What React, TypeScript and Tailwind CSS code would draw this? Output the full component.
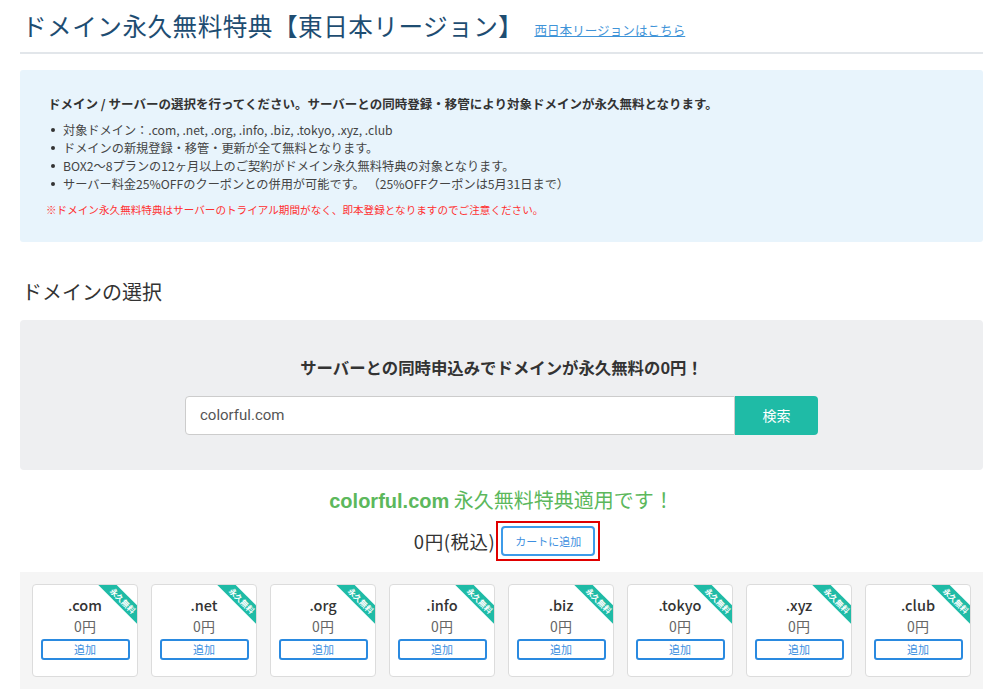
import React from "react";

const tlds = [".com", ".net", ".org", ".info", ".biz", ".tokyo", ".xyz", ".club"];

const bullets = [
    "対象ドメイン：.com, .net, .org, .info, .biz, .tokyo, .xyz, .club",
    "ドメインの新規登録・移管・更新が全て無料となります。",
    "BOX2～8プランの12ヶ月以上のご契約がドメイン永久無料特典の対象となります。",
    "サーバー料金25%OFFのクーポンとの併用が可能です。 （25%OFFクーポンは5月31日まで）",
];

function DomainCard({ tld }: { tld: string }) {
    return (
        <div className="relative w-[106px] h-[93px] bg-white border border-[#dcdcdc] rounded-[4px] overflow-hidden flex flex-col items-center pt-[11px]">
            {/* corner ribbon */}
            <div className="absolute -right-[24px] top-[9px] w-[76px] h-[13px] rotate-45 bg-[#1fbba6] flex items-center justify-center">
                <span className="text-[8px] leading-none font-bold text-white">永久無料</span>
            </div>
            <div className="text-[14.5px] leading-[18px] font-medium text-[#333]">{tld}</div>
            <div className="mt-[3px] text-[14px] leading-[18px] text-[#666]">0円</div>
            <button className="mt-[4px] w-[89px] h-[21px] border-2 border-[#2a8ae0] rounded-[3px] bg-white text-[11px] leading-none text-[#3a8fe0]">
                追加
            </button>
        </div>
    );
}

export default function App() {
    return (
        <div
            className="w-[1000px] h-[690px] overflow-hidden bg-white text-[#333]"
            style={{ fontFamily: '"Noto Sans CJK JP", "Noto Sans", sans-serif' }}
        >
            <div className="ml-[20px] w-[963px]">
                {/* Header */}
                <div className="flex items-end pt-[8px] pb-[10px] border-b-2 border-[#e2e6ea]">
                    <h1 className="text-[24.6px] leading-[34px] tracking-[0.5px] text-[#1e4d72] ml-[2px]">
                        ドメイン永久無料特典【東日本リージョン】
                    </h1>
                    <a className="ml-[11px] mb-[3px] text-[12.6px] leading-[18px] text-[#3f94d8] underline">
                        西日本リージョンはこちら
                    </a>
                </div>

                {/* Info box */}
                <div className="mt-[16px] h-[172px] bg-[#e8f4fc] rounded-[3px] pl-[28px] pt-[25px]">
                    <p className="text-[12.5px] leading-[18px] font-bold text-[#333]">
                        ドメイン / サーバーの選択を行ってください。サーバーとの同時登録・移管により対象ドメインが永久無料となります。
                    </p>
                    <ul className="mt-[8px]">
                        {bullets.map((b) => (
                            <li key={b} className="flex items-center h-[18px] text-[12.2px] text-[#444]">
                                <span className="ml-[3px] w-[4px] h-[4px] rounded-full bg-[#333] shrink-0"></span>
                                <span className="ml-[8px]">{b}</span>
                            </li>
                        ))}
                    </ul>
                    <p className="mt-[9px] -ml-[2px] text-[10.6px] leading-[16px] text-[#ff3030]">
                        ※ドメイン永久無料特典はサーバーのトライアル期間がなく、即本登録となりますのでご注意ください。
                    </p>
                </div>

                {/* Domain select */}
                <h2 className="mt-[36px] ml-[2px] text-[20px] leading-[28px] text-[#333]">ドメインの選択</h2>

                <div className="mt-[14px] h-[150px] bg-[#eeeff1] rounded-[4px] flex flex-col items-center pt-[35px]">
                    <p className="text-[16.4px] leading-[24px] font-bold text-[#333]">
                        サーバーとの同時申込みでドメインが永久無料の0円！
                    </p>
                    <div className="mt-[17px] flex">
                        <div className="w-[550px] h-[39px] bg-white border border-[#cccccc] rounded-l-[4px] flex items-center pl-[14px]">
                            <span className="text-[15px] text-[#555]" style={{ fontFamily: "Roboto, sans-serif" }}>
                                colorful.com
                            </span>
                        </div>
                        <button className="w-[83px] h-[39px] bg-[#1fbba6] rounded-r-[4px] text-white text-[14px]">
                            検索
                        </button>
                    </div>
                </div>

                {/* Result */}
                <div className="mt-[16px] flex flex-col items-center">
                    <p className="text-[20px] leading-[28px] text-[#5cb85c]">
                        <span className="font-bold" style={{ fontFamily: '"Liberation Sans", Arial, sans-serif' }}>
                            colorful.com
                        </span>{" "}
                        永久無料特典適用です！
                    </p>
                    <div className="mt-[6px] flex items-center ml-[11px]">
                        <span className="text-[18.5px] leading-[26px] tracking-[0.5px] text-[#333]">0円(税込)</span>
                        <div className="ml-[1px] border-2 border-[#e00000] p-[3px]">
                            <button className="w-[94px] h-[30px] border-2 border-[#3d9be9] rounded-[4px] bg-white text-[11px] text-[#3d8fe0]">
                                カートに追加
                            </button>
                        </div>
                    </div>
                </div>

                {/* TLD cards */}
                <div className="mt-[11px] bg-[#f5f5f5] px-[12px] pt-[12px] pb-[12px] flex gap-[13px]">
                    {tlds.map((t) => (
                        <DomainCard key={t} tld={t} />
                    ))}
                </div>
            </div>
        </div>
    );
}
